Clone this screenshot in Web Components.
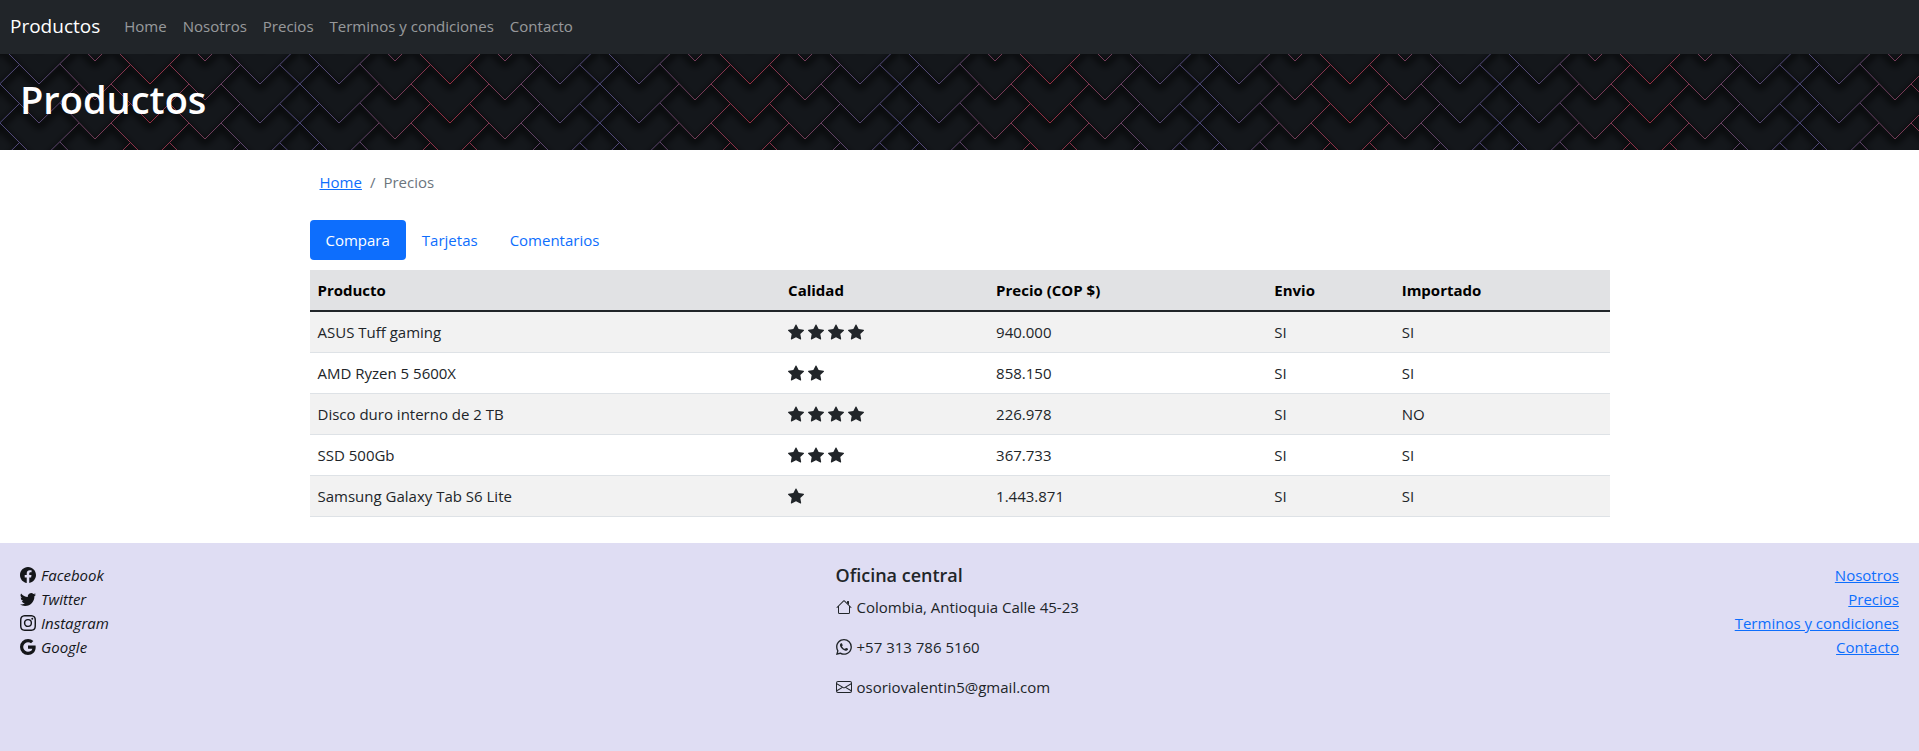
<!DOCTYPE html>
<html lang="es">
<head>
<meta charset="utf-8">
<meta name="viewport" content="width=device-width, initial-scale=1">
<title>Productos</title>
<style>
  body {
    margin: 0;
    min-height: 100vh;
    display: flex;
    flex-direction: column;
    background: #fff;
    color: #212529;
    font: 15px/24px "Open Sans", "Noto Sans", sans-serif;
    --link: #0d6efd;
  }
  site-footer { flex: 1; }
</style>
</head>
<body>
<site-nav>
  <a href="#" slot="brand">Productos</a>
  <nav-link>Home</nav-link>
  <nav-link>Nosotros</nav-link>
  <nav-link>Precios</nav-link>
  <nav-link>Terminos y condiciones</nav-link>
  <nav-link>Contacto</nav-link>
</site-nav>
<page-hero>Productos</page-hero>
<page-main>
  <bread-crumb>Precios</bread-crumb>
  <pill-tabs></pill-tabs>
  <price-table></price-table>
</page-main>
<site-footer></site-footer>

<script>
const ICONS = {
  star: '<path d="M3.612 15.443c-.386.198-.824-.149-.746-.592l.83-4.73L.173 6.765c-.329-.314-.158-.888.283-.95l4.898-.696L7.538.792c.197-.39.73-.39.927 0l2.184 4.327 4.898.696c.441.062.612.636.282.95l-3.522 3.356.83 4.73c.078.443-.36.79-.746.592L8 13.187l-4.389 2.256z"/>',
  facebook: '<path d="M16 8.049c0-4.446-3.582-8.05-8-8.05C3.58 0-.002 3.603-.002 8.05c0 4.017 2.926 7.347 6.75 7.951v-5.625h-2.03V8.05H6.75V6.275c0-2.017 1.195-3.131 3.022-3.131.876 0 1.791.157 1.791.157v1.98h-1.009c-.993 0-1.303.621-1.303 1.258v1.51h2.218l-.354 2.326H9.25V16c3.824-.604 6.75-3.934 6.75-7.951z"/>',
  twitter: '<path d="M5.026 15c6.038 0 9.341-5.003 9.341-9.334 0-.14 0-.282-.006-.422A6.685 6.685 0 0 0 16 3.542a6.658 6.658 0 0 1-1.889.518 3.301 3.301 0 0 0 1.447-1.817 6.533 6.533 0 0 1-2.087.793A3.286 3.286 0 0 0 7.875 6.03a9.325 9.325 0 0 1-6.767-3.429 3.289 3.289 0 0 0 1.018 4.382A3.323 3.323 0 0 1 .64 6.575v.045a3.288 3.288 0 0 0 2.632 3.218 3.203 3.203 0 0 1-.865.115 3.23 3.23 0 0 1-.614-.057 3.283 3.283 0 0 0 3.067 2.277A6.588 6.588 0 0 1 .78 13.58a6.32 6.32 0 0 1-.78-.045A9.344 9.344 0 0 0 5.026 15z"/>',
  instagram: '<path d="M8 0C5.829 0 5.556.01 4.703.048 3.85.088 3.269.222 2.76.42a3.917 3.917 0 0 0-1.417.923A3.927 3.927 0 0 0 .42 2.76C.222 3.268.087 3.85.048 4.7.01 5.555 0 5.827 0 8.001c0 2.172.01 2.444.048 3.297.04.852.174 1.433.372 1.942.205.526.478.972.923 1.417.444.445.89.719 1.416.923.51.198 1.09.333 1.942.372C5.555 15.99 5.827 16 8 16s2.444-.01 3.298-.048c.851-.04 1.434-.174 1.943-.372a3.916 3.916 0 0 0 1.416-.923c.445-.445.718-.891.923-1.417.197-.509.332-1.09.372-1.942C15.99 10.445 16 10.173 16 8s-.01-2.445-.048-3.299c-.04-.851-.175-1.433-.372-1.941a3.926 3.926 0 0 0-.923-1.417A3.911 3.911 0 0 0 13.24.42c-.51-.198-1.092-.333-1.943-.372C10.443.01 10.172 0 7.998 0h.003zm-.717 1.442h.718c2.136 0 2.389.007 3.232.046.78.035 1.204.166 1.486.275.373.145.64.319.92.599.28.28.453.546.598.92.11.281.24.705.275 1.485.039.843.047 1.096.047 3.231s-.008 2.389-.047 3.232c-.035.78-.166 1.203-.275 1.485a2.47 2.47 0 0 1-.599.919c-.28.28-.546.453-.92.598-.28.11-.704.24-1.485.276-.843.038-1.096.047-3.232.047s-2.39-.009-3.233-.047c-.78-.036-1.203-.166-1.485-.276a2.478 2.478 0 0 1-.92-.598 2.48 2.48 0 0 1-.6-.92c-.109-.281-.24-.705-.275-1.485-.038-.843-.046-1.096-.046-3.233 0-2.136.008-2.388.046-3.231.036-.78.166-1.204.276-1.486.145-.373.319-.64.599-.92.28-.28.546-.453.92-.598.282-.11.705-.24 1.485-.276.738-.034 1.024-.044 2.515-.045v.002zm4.988 1.328a.96.96 0 1 0 0 1.92.96.96 0 0 0 0-1.92zm-4.27 1.122a4.109 4.109 0 1 0 0 8.217 4.109 4.109 0 0 0 0-8.217zm0 1.441a2.667 2.667 0 1 1 0 5.334 2.667 2.667 0 0 1 0-5.334z"/>',
  google: '<path d="M15.545 6.558a9.42 9.42 0 0 1 .139 1.626c0 2.434-.87 4.492-2.384 5.885h.002C11.978 15.292 10.158 16 8 16A8 8 0 1 1 8 0a7.689 7.689 0 0 1 5.352 2.082l-2.284 2.284A4.347 4.347 0 0 0 8 3.166c-2.087 0-3.86 1.408-4.492 3.304a4.792 4.792 0 0 0 0 3.063h.003c.635 1.893 2.405 3.301 4.492 3.301 1.078 0 2.004-.276 2.722-.764h-.003a3.702 3.702 0 0 0 1.599-2.431H8v-3.08h7.545z"/>',
  house: '<path fill-rule="evenodd" d="M2 13.5V7h1v6.5a.5.5 0 0 0 .5.5h9a.5.5 0 0 0 .5-.5V7h1v6.5a1.5 1.5 0 0 1-1.5 1.5h-9A1.5 1.5 0 0 1 2 13.5zm11-11V6l-2-2V2.500a.5.5 0 0 1 .5-.5h1a.5.5 0 0 1 .5.5z"/><path fill-rule="evenodd" d="M7.293 1.500a1 1 0 0 1 1.414 0l6.647 6.646a.5.5 0 0 1-.708.708L8 2.207 1.354 8.854a.5.5 0 1 1-.708-.708L7.293 1.500z"/>',
  whatsapp: '<path d="M13.601 2.326A7.854 7.854 0 0 0 7.994 0C3.627 0 .068 3.558.064 7.926c0 1.399.366 2.760 1.057 3.965L0 16l4.204-1.102a7.933 7.933 0 0 0 3.790.965h.004c4.368 0 7.926-3.558 7.930-7.930A7.898 7.898 0 0 0 13.600 2.326zM7.994 14.521a6.573 6.573 0 0 1-3.356-.920l-.240-.144-2.494.654.666-2.433-.156-.251a6.560 6.560 0 0 1-1.007-3.505c0-3.626 2.957-6.584 6.591-6.584a6.560 6.560 0 0 1 4.660 1.931 6.557 6.557 0 0 1 1.928 4.660c-.004 3.639-2.961 6.592-6.592 6.592zm3.615-4.934c-.197-.099-1.170-.578-1.353-.646-.182-.065-.315-.099-.445.099-.133.197-.513.646-.627.775-.114.133-.232.148-.430.050-.197-.100-.836-.308-1.592-.985-.590-.525-.985-1.175-1.103-1.372-.114-.198-.011-.304.088-.403.087-.088.197-.232.296-.346.100-.114.133-.198.198-.330.065-.134.034-.248-.015-.347-.050-.099-.445-1.076-.612-1.470-.160-.389-.323-.335-.445-.340-.114-.007-.247-.007-.380-.007a.729.729 0 0 0-.529.247c-.182.198-.691.677-.691 1.654 0 .977.710 1.916.810 2.049.098.133 1.394 2.132 3.383 2.992.470.205.840.326 1.129.418.475.152.904.129 1.246.080.380-.058 1.171-.480 1.338-.943.164-.464.164-.860.114-.943-.049-.084-.182-.133-.380-.232z"/>',
  envelope: '<path d="M0 4a2 2 0 0 1 2-2h12a2 2 0 0 1 2 2v8a2 2 0 0 1-2 2H2a2 2 0 0 1-2-2V4zm2-1a1 1 0 0 0-1 1v.217l7 4.200 7-4.200V4a1 1 0 0 0-1-1H2zm13 2.383-4.758 2.855L15 11.114v-5.730zm-.034 6.878L9.271 8.820 8 9.583 6.728 8.820l-5.694 3.440A1 1 0 0 0 2 13h12a1 1 0 0 0 .966-.739zM1 11.114l4.758-2.876L1 5.383v5.730z"/>'
};

function define(name, render) {
  customElements.define(name, class extends HTMLElement {
    connectedCallback() {
      if (this.shadowRoot) return;
      const t = document.createElement('template');
      t.innerHTML = render(this);
      this.attachShadow({ mode: 'open' }).append(t.content.cloneNode(true));
    }
  });
}

define('ui-icon', el => `
  <style>
    :host { display: inline-block; width: 16px; height: 16px; vertical-align: -2px; }
    svg { display: block; width: 100%; height: 100%; }
  </style>
  <svg viewBox="0 0 16 16" fill="currentColor" aria-hidden="true">${ICONS[el.getAttribute('name')]}</svg>`);

define('site-nav', () => `
  <style>
    :host { display: block; background: #212529; }
    nav { display: flex; align-items: center; gap: 16px; padding: 7px 10px 9px; }
    ::slotted([slot=brand]) { color: #fff; font-size: 19px; line-height: 38px; text-decoration: none; }
    div { display: flex; flex-wrap: wrap; }
  </style>
  <nav><slot name="brand"></slot><div><slot></slot></div></nav>`);

define('nav-link', () => `
  <style>
    :host { display: block; }
    a { display: block; padding: 7px 8px; color: rgba(255, 255, 255, .55); text-decoration: none; }
  </style>
  <a href="#"><slot></slot></a>`);

/* Overlapping scales: each wing is "x1 y1 x2 y2", repeated every 39px down and 300px across. */
const WINGS = [
  [0, 30, 39, 69], [39, 69, 79, 30],
  [60, 10, 95, 46], [95, 46, 130, 11],
  [111, 30, 150, 69], [150, 69, 189, 30],
  [169, 10, 205, 46], [205, 46, 240, 11],
  [221, 30, 260, 69], [260, 69, 319, 11],
  [-40, 69, 19, 11], [280, 11, 300, 30]
];
const wingPath = dy => WINGS.map(([a, b, c, d]) => `M${a} ${b + dy}L${c} ${d + dy}`).join('');
const scalePath = [-78, -39, 0, 39].map(wingPath).join('');

define('page-hero', () => `
  <style>
    :host { display: grid; background: #14171b; color: #fff; }
    svg, h1 { grid-area: 1 / 1; }
    svg { width: 100%; height: 100%; min-width: 0; display: block; contain: size; }
    h1 { margin: 0; padding: 21px 20px 27px; font-size: 38px; line-height: 48px; font-weight: 600; z-index: 1; }
  </style>
  <svg aria-hidden="true">
    <defs>
      <linearGradient id="hue" gradientUnits="userSpaceOnUse" x1="0" y1="0" x2="300" y2="0">
        <stop offset="0" stop-color="#4f4a7c"/><stop offset=".16" stop-color="#57466f"/>
        <stop offset=".32" stop-color="#743c58"/><stop offset=".5" stop-color="#982d42"/>
        <stop offset=".68" stop-color="#743c58"/><stop offset=".84" stop-color="#57466f"/>
        <stop offset="1" stop-color="#4f4a7c"/>
      </linearGradient>
      <filter id="soft" x="-10%" y="-10%" width="120%" height="120%"><feGaussianBlur stdDeviation="3"/></filter>
      <pattern id="scales" width="300" height="39" patternUnits="userSpaceOnUse">
        <path d="${scalePath}" transform="translate(0 4)" fill="none" stroke="#07070a" stroke-opacity=".6" stroke-width="6" filter="url(#soft)"/>
        <path d="${scalePath}" fill="none" stroke="url(#hue)"/>
      </pattern>
    </defs>
    <rect width="100%" height="100%" fill="url(#scales)"/>
  </svg>
  <h1><slot></slot></h1>`);

define('page-main', () => `
  <style>
    :host { display: block; box-sizing: border-box; width: 100%; max-width: 1320px; margin: 0 auto; padding: 20px 10px 26px; }
  </style>
  <slot></slot>`);

define('bread-crumb', () => `
  <style>
    :host { display: block; }
    ol { display: flex; gap: 8px; margin: 0; padding: 0 10px; list-style: none; color: #6c757d; }
    a { color: var(--link); }
    .current::before { content: "/"; padding-right: 8px; }
  </style>
  <nav aria-label="breadcrumb"><ol><li><a href="#">Home</a></li><li class="current" aria-current="page"><slot></slot></li></ol></nav>`);

define('pill-tabs', () => `
  <style>
    :host { display: block; margin: 26px 0 10px; }
    div { display: flex; flex-wrap: wrap; }
    button { border: 0; border-radius: 4px; padding: 8px 16px; background: none; color: var(--link); font: inherit; cursor: pointer; }
    [aria-selected=true] { background: var(--link); color: #fff; }
  </style>
  <div role="tablist">
    <button role="tab" aria-selected="true">Compara</button>
    <button role="tab" aria-selected="false">Tarjetas</button>
    <button role="tab" aria-selected="false">Comentarios</button>
  </div>`);

const ROWS = [
  ['ASUS Tuff gaming', 4, '940.000', 'SI', 'SI'],
  ['AMD Ryzen 5 5600X', 2, '858.150', 'SI', 'SI'],
  ['Disco duro interno de 2 TB', 4, '226.978', 'SI', 'NO'],
  ['SSD 500Gb', 3, '367.733', 'SI', 'SI'],
  ['Samsung Galaxy Tab S6 Lite', 1, '1.443.871', 'SI', 'SI']
];

define('price-table', () => `
  <style>
    :host { display: block; }
    table { width: 100%; border-spacing: 0; table-layout: fixed; }
    th, td { padding: 8px; text-align: left; }
    th { background: #e1e2e4; color: #000; font-weight: 700; border-bottom: 2px solid #212529; }
    td { border-bottom: 1px solid #dee2e6; }
    tr:nth-child(odd) td { background: #f2f2f2; }
    .name { width: 36.2%; } .stars { width: 16%; } .price { width: 21.4%; } .ship { width: 9.8%; }
    span { display: flex; gap: 4px; }
  </style>
  <table>
    <colgroup><col class="name"><col class="stars"><col class="price"><col class="ship"><col></colgroup>
    <thead><tr><th scope="col">Producto</th><th scope="col">Calidad</th><th scope="col">Precio (COP $)</th><th scope="col">Envio</th><th scope="col">Importado</th></tr></thead>
    <tbody>${ROWS.map(([n, s, p, e, i]) => `<tr><td>${n}</td><td><span role="img" aria-label="${s} estrellas">${'<ui-icon name="star"></ui-icon>'.repeat(s)}</span></td><td>${p}</td><td>${e}</td><td>${i}</td></tr>`).join('')}</tbody>
  </table>`);

define('icon-line', el => `
  <style>
    :host { display: flex; align-items: center; gap: 5px; }
  </style>
  <ui-icon name="${el.getAttribute('icon')}"></ui-icon><slot></slot>`);

define('site-footer', () => `
  <style>
    :host { display: block; background: #dfddf3; }
    footer { display: grid; grid-template-columns: 1fr minmax(248px, auto) 1fr; padding: 20px; }
    .social { font-style: italic; color: #141619; }
    h5 { margin: 0 0 8px; font-size: 18px; line-height: 24px; font-weight: 600; }
    address { font-style: normal; display: grid; gap: 16px; }
    nav { display: flex; flex-direction: column; align-items: flex-end; }
    a { color: var(--link); }
  </style>
  <footer>
    <div class="social">
      <icon-line icon="facebook">Facebook</icon-line>
      <icon-line icon="twitter">Twitter</icon-line>
      <icon-line icon="instagram">Instagram</icon-line>
      <icon-line icon="google">Google</icon-line>
    </div>
    <div>
      <h5>Oficina central</h5>
      <address>
        <icon-line icon="house">Colombia, Antioquia Calle 45-23</icon-line>
        <icon-line icon="whatsapp">+57 313 786 5160</icon-line>
        <icon-line icon="envelope">osoriovalentin5@gmail.com</icon-line>
      </address>
    </div>
    <nav aria-label="Enlaces">
      <a href="#">Nosotros</a>
      <a href="#">Precios</a>
      <a href="#">Terminos y condiciones</a>
      <a href="#">Contacto</a>
    </nav>
  </footer>`);
</script>
</body>
</html>
